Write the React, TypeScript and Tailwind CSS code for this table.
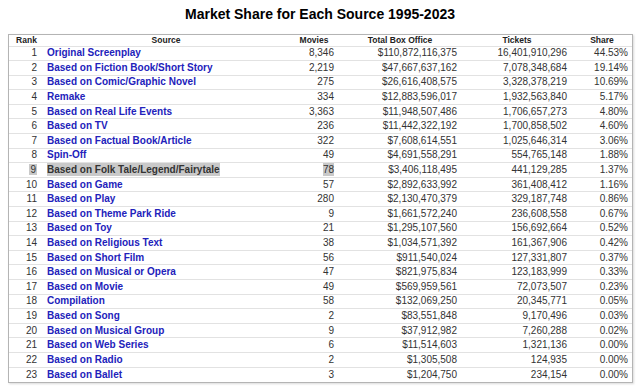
import React from "react";

const rows: [number, string, string, string, string, string][] = [
  [1, "Original Screenplay", "8,346", "$110,872,116,375", "16,401,910,296", "44.53%"],
  [2, "Based on Fiction Book/Short Story", "2,219", "$47,667,637,162", "7,078,348,684", "19.14%"],
  [3, "Based on Comic/Graphic Novel", "275", "$26,616,408,575", "3,328,378,219", "10.69%"],
  [4, "Remake", "334", "$12,883,596,017", "1,932,563,840", "5.17%"],
  [5, "Based on Real Life Events", "3,363", "$11,948,507,486", "1,706,657,273", "4.80%"],
  [6, "Based on TV", "236", "$11,442,322,192", "1,700,858,502", "4.60%"],
  [7, "Based on Factual Book/Article", "322", "$7,608,614,551", "1,025,646,314", "3.06%"],
  [8, "Spin-Off", "49", "$4,691,558,291", "554,765,148", "1.88%"],
  [9, "Based on Folk Tale/Legend/Fairytale", "78", "$3,406,118,495", "441,129,285", "1.37%"],
  [10, "Based on Game", "57", "$2,892,633,992", "361,408,412", "1.16%"],
  [11, "Based on Play", "280", "$2,130,470,379", "329,187,748", "0.86%"],
  [12, "Based on Theme Park Ride", "9", "$1,661,572,240", "236,608,558", "0.67%"],
  [13, "Based on Toy", "21", "$1,295,107,560", "156,692,664", "0.52%"],
  [14, "Based on Religious Text", "38", "$1,034,571,392", "161,367,906", "0.42%"],
  [15, "Based on Short Film", "56", "$911,540,024", "127,331,807", "0.37%"],
  [16, "Based on Musical or Opera", "47", "$821,975,834", "123,183,999", "0.33%"],
  [17, "Based on Movie", "49", "$569,959,561", "72,073,507", "0.23%"],
  [18, "Compilation", "58", "$132,069,250", "20,345,771", "0.05%"],
  [19, "Based on Song", "2", "$83,551,848", "9,170,496", "0.03%"],
  [20, "Based on Musical Group", "9", "$37,912,982", "7,260,288", "0.02%"],
  [21, "Based on Web Series", "6", "$11,514,603", "1,321,136", "0.00%"],
  [22, "Based on Radio", "2", "$1,305,508", "124,935", "0.00%"],
  [23, "Based on Ballet", "3", "$1,204,750", "234,154", "0.00%"],
];

export default function App() {
  return (
    <div
      className="w-[640px] h-[391px] bg-white overflow-hidden text-[#222]"
      style={{ fontFamily: '"Liberation Sans", Arial, sans-serif' }}
    >
      <div className="h-[30px] flex items-center justify-center pt-[0px]">
        <h1 className="text-[14px] font-bold text-black leading-none mt-[-2px]">
          Market Share for Each Source 1995-2023
        </h1>
      </div>
      <div className="ml-[8px] mt-[4px] w-[625px] border border-[#b4b4b4] shadow-[1px_1px_2px_rgba(0,0,0,0.15)]">
        <table className="table-fixed border-collapse w-full">
          <colgroup>
            <col className="w-[33px]" />
            <col className="w-[248px]" />
            <col className="w-[48px]" />
            <col className="w-[124px]" />
            <col className="w-[110px]" />
            <col className="w-[60px]" />
          </colgroup>
          <thead>
            <tr className="h-[11px] text-[8.5px] font-bold text-[#222] leading-none">
              <th className="text-center pl-[2px]">Rank</th>
              <th className="text-center">Source</th>
              <th className="text-center">Movies</th>
              <th className="text-center">Total Box Office</th>
              <th className="text-center">Tickets</th>
              <th className="text-center">Share</th>
            </tr>
          </thead>
          <tbody className="text-[10px] leading-none text-[#333]">
            {rows.map((r) => {
              const hl = r[0] === 9;
              return (
                <tr key={r[0]} className="h-[14.6px] border-t border-[#e2e2e2]">
                  <td className="text-right pr-[5px]">
                    {hl ? <span className="bg-[#c9c9c9] px-[1px]">{r[0]}</span> : r[0]}
                  </td>
                  <td className="pl-[5px] font-bold whitespace-nowrap">
                    {hl ? (
                      <span className="bg-[#c9c9c9] text-[#333] py-[1px]">{r[1]}</span>
                    ) : (
                      <span className="text-[#2222bb]">{r[1]}</span>
                    )}
                  </td>
                  <td className="text-right pr-[4px]">
                    {hl ? <span className="bg-[#c9c9c9] py-[1px]">{r[2]}</span> : r[2]}
                  </td>
                  <td className="text-right pr-[5px]">{r[3]}</td>
                  <td className="text-right pr-[5px]">{r[4]}</td>
                  <td className="text-right pr-[4px]">{r[5]}</td>
                </tr>
              );
            })}
          </tbody>
        </table>
      </div>
    </div>
  );
}
